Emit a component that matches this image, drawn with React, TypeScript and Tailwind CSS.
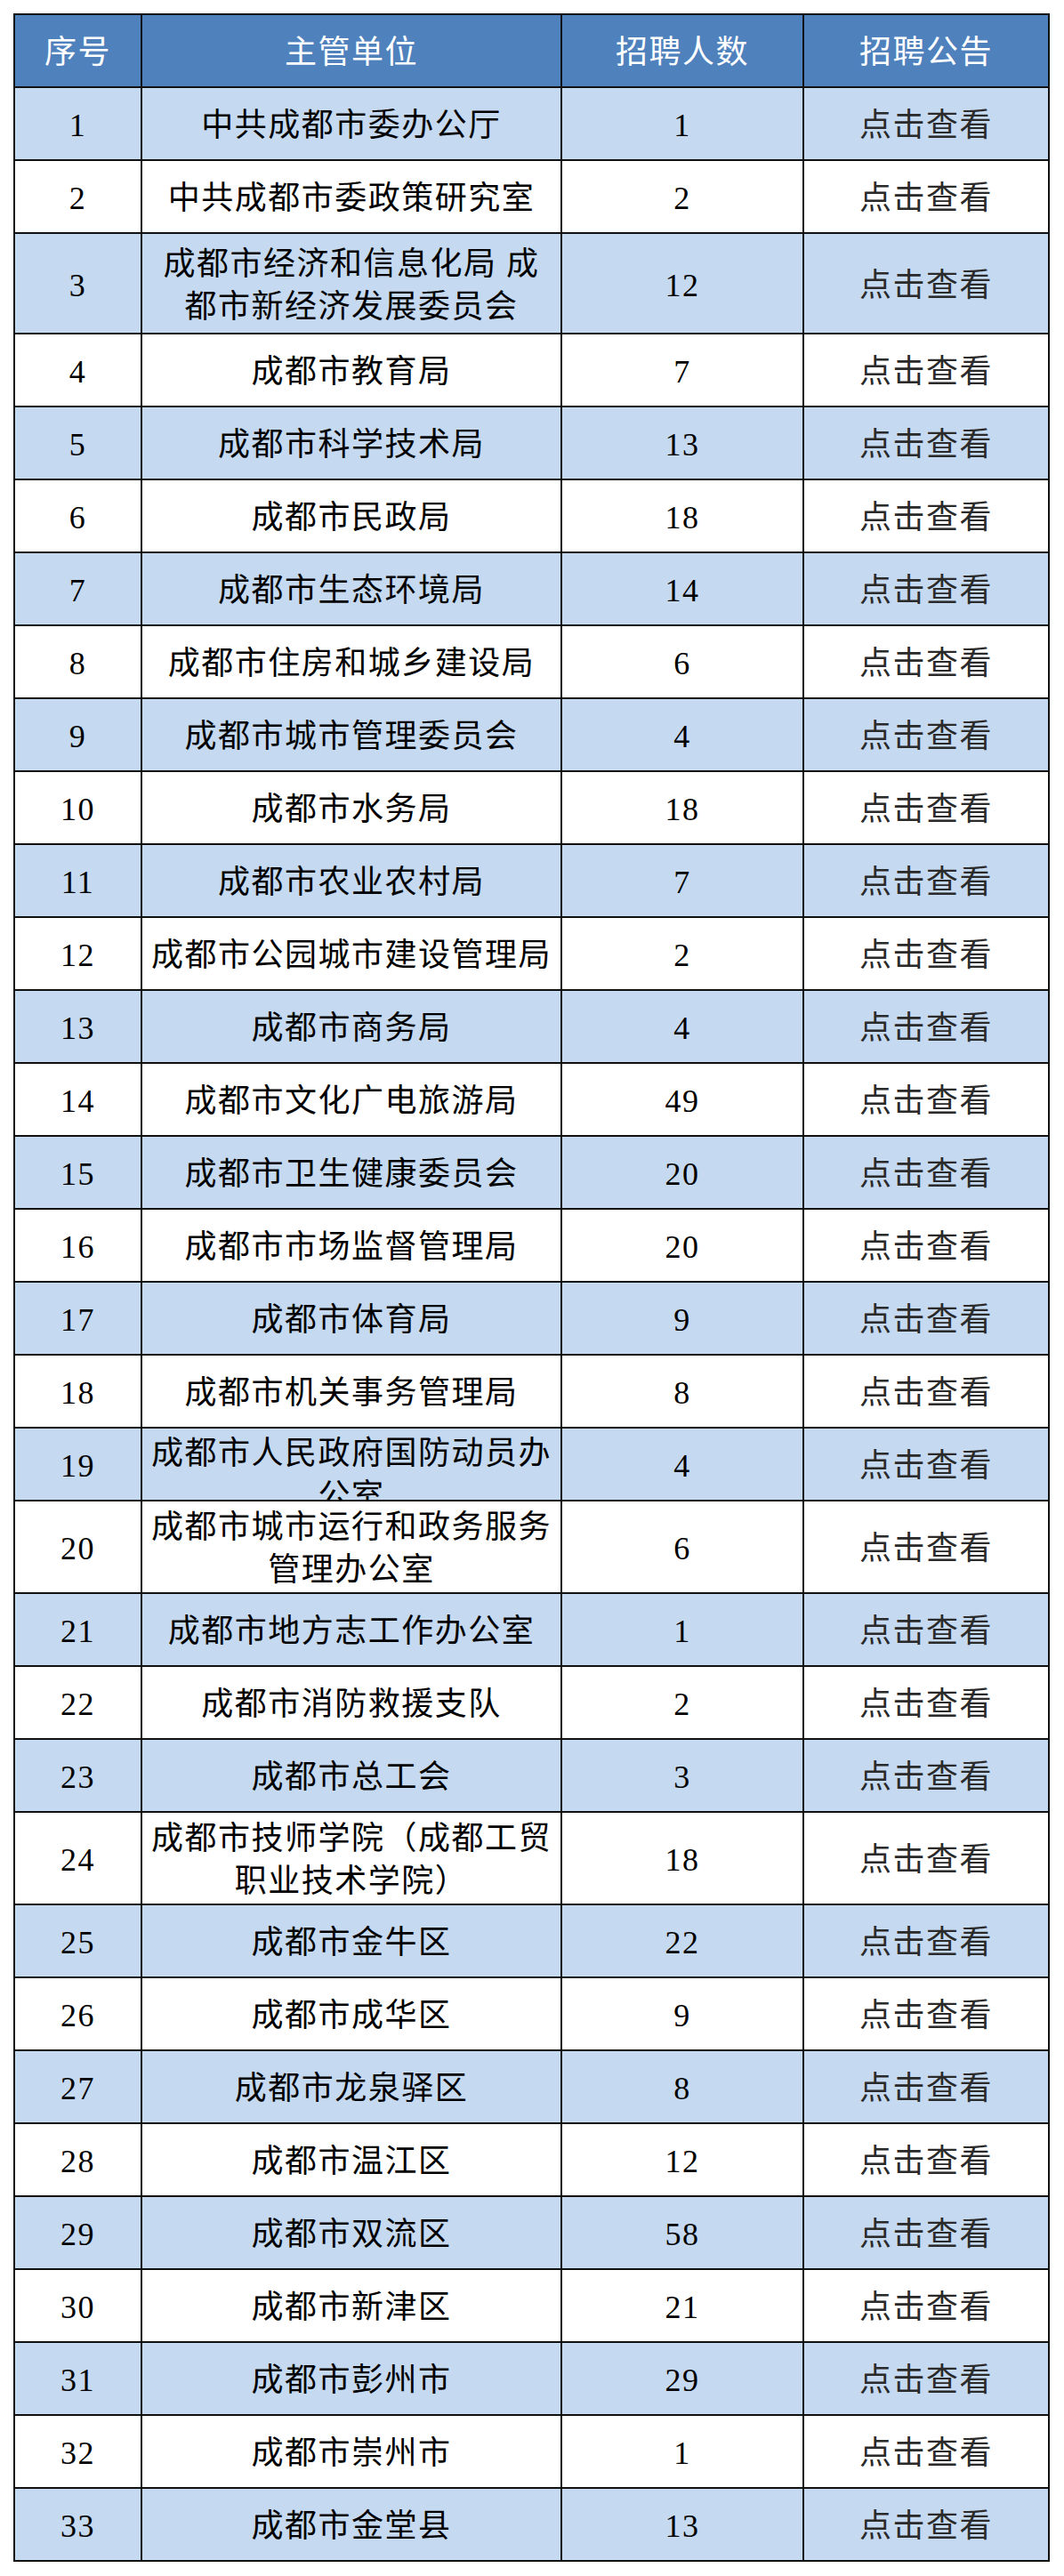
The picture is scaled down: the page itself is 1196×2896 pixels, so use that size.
const rows: [number, string, number, number?][] = [
  [1, '中共成都市委办公厅', 1],
  [2, '中共成都市委政策研究室', 2],
  [3, '成都市经济和信息化局 成都市新经济发展委员会', 12, 113],
  [4, '成都市教育局', 7],
  [5, '成都市科学技术局', 13],
  [6, '成都市民政局', 18],
  [7, '成都市生态环境局', 14],
  [8, '成都市住房和城乡建设局', 6],
  [9, '成都市城市管理委员会', 4],
  [10, '成都市水务局', 18],
  [11, '成都市农业农村局', 7],
  [12, '成都市公园城市建设管理局', 2],
  [13, '成都市商务局', 4],
  [14, '成都市文化广电旅游局', 49],
  [15, '成都市卫生健康委员会', 20],
  [16, '成都市市场监督管理局', 20],
  [17, '成都市体育局', 9],
  [18, '成都市机关事务管理局', 8],
  [19, '成都市人民政府国防动员办公室', 4],
  [20, '成都市城市运行和政务服务管理办公室', 6, 104],
  [21, '成都市地方志工作办公室', 1],
  [22, '成都市消防救援支队', 2],
  [23, '成都市总工会', 3],
  [24, '成都市技师学院（成都工贸职业技术学院）', 18, 104],
  [25, '成都市金牛区', 22],
  [26, '成都市成华区', 9],
  [27, '成都市龙泉驿区', 8],
  [28, '成都市温江区', 12],
  [29, '成都市双流区', 58],
  [30, '成都市新津区', 21],
  [31, '成都市彭州市', 29],
  [32, '成都市崇州市', 1],
  [33, '成都市金堂县', 13],
];

const font = { fontFamily: '"Liberation Serif", "Noto Sans CJK SC", serif' };

function Cell({
  children,
  className = '',
  height,
  clip = false,
}: {
  children: React.ReactNode;
  className?: string;
  height: number;
  clip?: boolean;
}) {
  return (
    <div
      className={`flex justify-center overflow-hidden border-r-2 border-b-2 border-[#111] px-2 text-center ${
        clip ? 'items-start pt-[4px]' : 'items-center pt-[4px]'
      } ${className}`}
      style={{ height }}
    >
      <div>{children}</div>
    </div>
  );
}

export default function App() {
  return (
    <main className="min-h-[2896px] bg-white pl-[15px] pt-[15px]" style={font}>
      <div className="w-fit border-t-2 border-l-2 border-[#111] text-[36px] leading-[48px] tracking-[1.5px]">
        <div className="grid grid-cols-[143px_472px_272px_276px] bg-[#4f81bd] text-white">
          <Cell height={82}>序号</Cell>
          <Cell height={82}>主管单位</Cell>
          <Cell height={82}>招聘人数</Cell>
          <Cell height={82}>招聘公告</Cell>
        </div>
        {rows.map(([no, unit, count, h]) => {
          const height = h ?? 82;
          const clip = no === 19;
          return (
            <div
              key={no}
              className={`grid grid-cols-[143px_472px_272px_276px] text-black ${
                no % 2 === 1 ? 'bg-[#c5d9f1]' : 'bg-white'
              }`}
            >
              <Cell height={height}>{no}</Cell>
              <Cell height={height} clip={clip}>
                {unit}
              </Cell>
              <Cell height={height}>{count}</Cell>
              <Cell height={height} className="text-[#2a2a2a]">
                点击查看
              </Cell>
            </div>
          );
        })}
      </div>
    </main>
  );
}
